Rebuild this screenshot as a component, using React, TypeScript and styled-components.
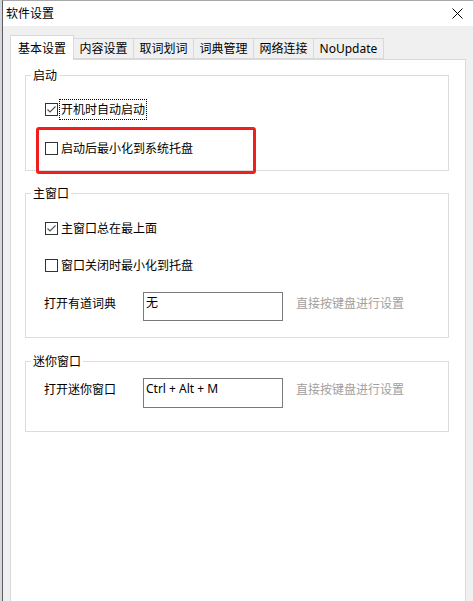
import { createGlobalStyle, styled } from "styled-components";

const GlobalStyle = createGlobalStyle`
  html, body {
    margin: 0;
    padding: 0;
  }
  body {
    width: 473px;
    height: 601px;
    overflow: hidden;
    background: #d4d8de;
    font-family: "Noto Sans", "Noto Sans CJK SC", sans-serif;
    font-size: 12px;
    line-height: 17px;
    color: #000;
  }
  * {
    box-sizing: border-box;
  }
`;

const Window = styled.div`
  display: flex;
  flex-direction: column;
  height: 601px;
  margin-left: 2px;
  border-left: 1px solid #5c5c5c;
  border-top: 1px solid #a8a8a8;
  background: #f0f0f0;
`;

const TitleBar = styled.div`
  display: flex;
  align-items: center;
  justify-content: space-between;
  height: 25px;
  padding: 0 6px 0 3px;
  background: #fff;
  line-height: 17px;
`;

const CloseButton = styled.div`
  display: flex;
  align-items: center;
  justify-content: center;
  width: 20px;
  height: 20px;
`;

const Body = styled.div`
  flex: 1;
  display: flex;
  flex-direction: column;
  padding: 9px 7px 0 7px;
`;

const TabBar = styled.div`
  display: flex;
  align-items: flex-end;
  height: 24px;
`;

const Tab = styled.div<{ $active?: boolean }>`
  display: flex;
  align-items: center;
  justify-content: center;
  height: ${(p) => (p.$active ? 25 : 21)}px;
  margin-bottom: ${(p) => (p.$active ? -1 : 0)}px;
  margin-left: ${(p) => (p.$active ? 0 : -1)}px;
  padding: 0 ${(p) => (p.$active ? 7 : 5.5)}px;
  border: 1px solid #d9d9d9;
  border-bottom: ${(p) => (p.$active ? "none" : "1px solid #d9d9d9")};
  background: ${(p) => (p.$active ? "#fff" : "#f0f0f0")};
  position: ${(p) => (p.$active ? "relative" : "static")};
  line-height: 17px;
  white-space: nowrap;
`;

const Panel = styled.div`
  flex: 1;
  display: flex;
  flex-direction: column;
  padding: 7px 16px 0 14px;
  background: #fff;
  border: 1px solid #d9d9d9;
  border-bottom: none;
`;

const Group = styled.fieldset<{ $after?: number }>`
  margin: 0 0 ${(p) => p.$after ?? 0}px;
  padding: 0;
  min-width: 0;
  border: 1px solid #dcdcdc;
`;

const Legend = styled.legend`
  margin-left: 5px;
  padding: 0 2px;
  line-height: 17px;
`;

const GroupBody = styled.div<{ $top: number; $bottom: number; $gap: number }>`
  display: flex;
  flex-direction: column;
  gap: ${(p) => p.$gap}px;
  padding: ${(p) => p.$top}px 0 ${(p) => p.$bottom}px 19px;
`;

const CheckRow = styled.div`
  position: relative;
  display: flex;
  align-items: center;
  height: 20px;
`;

const Box = styled.span`
  display: flex;
  align-items: center;
  justify-content: center;
  width: 13px;
  height: 13px;
  border: 1px solid #333;
  background: #fff;
  flex-shrink: 0;
`;

const CheckText = styled.span<{ $focused?: boolean }>`
  margin-left: 1px;
  padding: 0 1px;
  line-height: 19px;
  border: 1px dotted ${(p) => (p.$focused ? "#000" : "transparent")};
  white-space: nowrap;
`;

const Highlight = styled.div`
  position: absolute;
  left: -9px;
  top: -11px;
  width: 220px;
  height: 47px;
  border: 3px solid #f21d1d;
  border-radius: 3px;
  pointer-events: none;
`;

const FieldRow = styled.div`
  display: flex;
  align-items: flex-start;
`;

const FieldLabel = styled.span`
  width: 99px;
  margin-left: -1px;
  padding-top: 3px;
  line-height: 17px;
  white-space: nowrap;
`;

const TextBox = styled.div<{ $h: number }>`
  width: 140px;
  height: ${(p) => p.$h}px;
  padding: 1px 2px;
  border: 1px solid #7a7a7a;
  background: #fff;
  line-height: 17px;
  white-space: nowrap;
`;

const Hint = styled.span`
  margin-left: 13px;
  padding-top: 3px;
  line-height: 17px;
  color: #a0a0a0;
  white-space: nowrap;
`;

function CloseIcon() {
  return (
    <svg width="11" height="11" viewBox="0 0 11 11">
      <path d="M0.5 0.5 L10.5 10.5 M10.5 0.5 L0.5 10.5" stroke="#000" strokeWidth="1" />
    </svg>
  );
}

function Checkbox({ label, checked, focused, highlighted }: CheckboxProps) {
  return (
    <CheckRow>
      <Box>
        {checked && (
          <svg width="11" height="11" viewBox="0 0 11 11">
            <path d="M1.5 5.5 L4 8 L9.5 2.5" stroke="#555" strokeWidth="1.2" fill="none" />
          </svg>
        )}
      </Box>
      <CheckText $focused={focused}>{label}</CheckText>
      {highlighted && <Highlight />}
    </CheckRow>
  );
}

interface CheckboxProps {
  label: string;
  checked?: boolean;
  focused?: boolean;
  highlighted?: boolean;
}

const tabs = ["基本设置", "内容设置", "取词划词", "词典管理", "网络连接", "NoUpdate"];

export default function App() {
  return (
    <>
      <GlobalStyle />
      <Window>
        <TitleBar>
          <span>软件设置</span>
          <CloseButton>
            <CloseIcon />
          </CloseButton>
        </TitleBar>
        <Body>
          <TabBar>
            {tabs.map((t, i) => (
              <Tab key={t} $active={i === 0}>
                {t}
              </Tab>
            ))}
          </TabBar>
          <Panel>
            <Group $after={14}>
              <Legend>启动</Legend>
              <GroupBody $top={15} $bottom={12} $gap={19}>
                <Checkbox label="开机时自动启动" checked focused />
                <Checkbox label="启动后最小化到系统托盘" highlighted />
              </GroupBody>
            </Group>
            <Group $after={15}>
              <Legend>主窗口</Legend>
              <GroupBody $top={16} $bottom={16} $gap={17}>
                <Checkbox label="主窗口总在最上面" checked />
                <Checkbox label="窗口关闭时最小化到托盘" />
                <FieldRow>
                  <FieldLabel>打开有道词典</FieldLabel>
                  <TextBox $h={29}>无</TextBox>
                  <Hint>直接按键盘进行设置</Hint>
                </FieldRow>
              </GroupBody>
            </Group>
            <Group>
              <Legend>迷你窗口</Legend>
              <GroupBody $top={8} $bottom={23} $gap={0}>
                <FieldRow>
                  <FieldLabel>打开迷你窗口</FieldLabel>
                  <TextBox $h={30}>Ctrl + Alt + M</TextBox>
                  <Hint>直接按键盘进行设置</Hint>
                </FieldRow>
              </GroupBody>
            </Group>
          </Panel>
        </Body>
      </Window>
    </>
  );
}
